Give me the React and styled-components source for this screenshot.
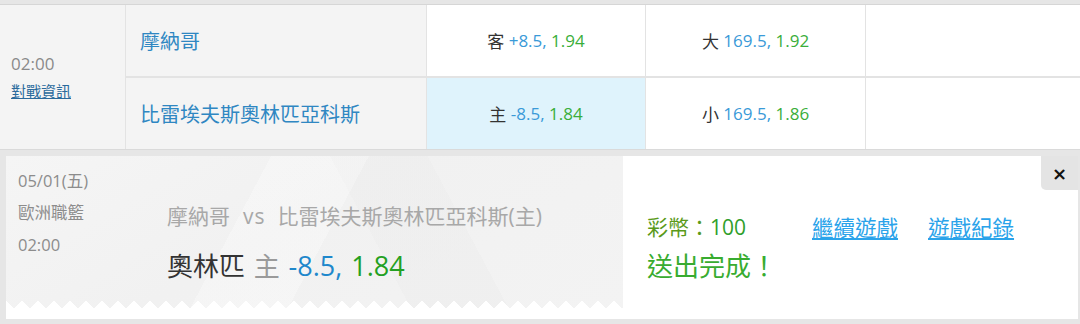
import React from 'react';
import styled, { createGlobalStyle } from 'styled-components';

const GlobalStyle = createGlobalStyle`
  body {
    margin: 0;
    background: #e6e6e6;
    font-family: "Open Sans", "Noto Sans CJK TC", sans-serif;
  }
`;

const Page = styled.div`
  width: 1080px;
  height: 324px;
  overflow: hidden;
  padding-top: 4px;
  box-sizing: border-box;
`;

const Table = styled.div`
  display: grid;
  grid-template-columns: 125px 300px 218px 219px 1fr;
  grid-template-rows: 71px 71px;
  column-gap: 1px;
  row-gap: 2px;
  background: #e3e3e3;
  border-top: 1px solid #d6d6d6;
  border-bottom: 1px solid #dadada;
`;

const TimeCell = styled.div`
  grid-row: span 2;
  background: #f4f4f4;
  padding-left: 11px;
  display: flex;
  flex-direction: column;
  justify-content: center;
  gap: 1px;
`;

const Time = styled.div`
  font-size: 17px;
  line-height: 26px;
  color: #8a8a8a;
`;

const InfoLink = styled.a`
  font-size: 15px;
  line-height: 26px;
  color: #2a6a9c;
  text-decoration: underline;
`;

const TeamCell = styled.div`
  background: #f4f4f4;
  padding-left: 14px;
  display: flex;
  align-items: center;
  font-size: 20px;
  color: #2f87c2;
`;

const OddsCell = styled.div`
  background: ${p => (p.selected ? '#dff3fc' : '#fff')};
  display: flex;
  align-items: center;
  justify-content: center;
  font-size: 17px;
  color: #333;
`;

const EmptyCell = styled.div`
  background: #fff;
`;

const Blue = styled.span`
  color: ${p => p.dark ? '#1f88cc' : '#3a9ad8'};
`;

const Green = styled.span`
  color: ${p => p.dark ? '#23a022' : '#3aae3a'};
`;

const Popup = styled.div`
  position: relative;
  margin: 6px 2px 0 6px;
  height: 163px;
  background: #fff;
  display: flex;
`;

const Ticket = styled.div`
  position: relative;
  width: 617px;
  height: 152px;
  box-sizing: border-box;
  padding: 9px 0 0 12px;
  display: flex;
  background:
    linear-gradient(118deg, transparent 38%, rgba(255,255,255,0.28) 38%, rgba(255,255,255,0.28) 52%, transparent 52%),
    linear-gradient(62deg, transparent 58%, rgba(236,236,236,0.45) 58%, rgba(236,236,236,0.45) 72%, transparent 72%),
    linear-gradient(150deg, #f5f5f5 0%, #f1f1f1 45%, #f3f3f3 100%);

  &::after {
    content: '';
    position: absolute;
    left: 0;
    right: 0;
    bottom: 0;
    height: 8px;
    background: conic-gradient(from -45deg at 50% 100%, transparent 90deg, #fff 0);
    background-size: 16px 8px;
  }
`;

const MetaColumn = styled.div`
  width: 149px;
  display: flex;
  flex-direction: column;
`;

const MetaLine = styled.div`
  font-size: 16.5px;
  line-height: 32px;
  color: #8c8c8c;
`;

const BetColumn = styled.div`
  display: flex;
  flex-direction: column;
  padding-top: 36px;
`;

const Matchup = styled.div`
  font-size: 21px;
  line-height: 30px;
  color: #a8a8a8;
  white-space: nowrap;
`;

const Versus = styled.span`
  margin: 0 12px 0 13px;
  letter-spacing: 1px;
`;

const Pick = styled.div`
  margin-top: 17px;
  font-size: 26px;
  line-height: 36px;
  color: #333;
  white-space: nowrap;
  word-spacing: 2px;
`;

const Side = styled.span`
  color: #9a9a9a;
`;

const Odds = styled.span`
  font-size: 27px;
`;

const Result = styled.div`
  padding: 57px 0 0 24px;
  display: flex;
  flex-direction: column;
`;

const CoinRow = styled.div`
  display: flex;
  align-items: center;
  height: 26px;
`;

const Coins = styled.div`
  font-size: 21px;
  color: #2fa02a;
  width: 165px;
`;

const CoinLabel = styled.span`
  color: #5a9a1a;
`;

const ActionLink = styled.a`
  font-size: 21.5px;
  color: #2aa3ea;
  text-decoration: underline;
  margin-right: 30px;
`;

const Done = styled.div`
  margin-top: 10px;
  font-size: 26px;
  line-height: 34px;
  color: #38ac30;
`;

const CloseButton = styled.div`
  position: absolute;
  top: 0;
  right: 0;
  width: 37px;
  height: 34px;
  background: #e4e4e4;
  border-bottom-left-radius: 5px;
  display: flex;
  align-items: center;
  justify-content: center;
  font-family: "DejaVu Sans", sans-serif;
  font-weight: bold;
  font-size: 18px;
  color: #111;
`;

export default function App() {
  return (
    <Page>
      <GlobalStyle />
      <Table>
        <TimeCell>
          <Time>02:00</Time>
          <InfoLink>對戰資訊</InfoLink>
        </TimeCell>
        <TeamCell>摩納哥</TeamCell>
        <OddsCell>客&nbsp;<Blue>+8.5,</Blue>&nbsp;<Green>1.94</Green></OddsCell>
        <OddsCell>大&nbsp;<Blue>169.5,</Blue>&nbsp;<Green>1.92</Green></OddsCell>
        <EmptyCell />
        <TeamCell>比雷埃夫斯奧林匹亞科斯</TeamCell>
        <OddsCell selected>主&nbsp;<Blue>-8.5,</Blue>&nbsp;<Green>1.84</Green></OddsCell>
        <OddsCell>小&nbsp;<Blue>169.5,</Blue>&nbsp;<Green>1.86</Green></OddsCell>
        <EmptyCell />
      </Table>
      <Popup>
        <Ticket>
          <MetaColumn>
            <MetaLine>05/01(五)</MetaLine>
            <MetaLine>歐洲職籃</MetaLine>
            <MetaLine>02:00</MetaLine>
          </MetaColumn>
          <BetColumn>
            <Matchup>摩納哥<Versus>vs</Versus>比雷埃夫斯奧林匹亞科斯(主)</Matchup>
            <Pick>奧林匹 <Side>主</Side> <Odds><Blue dark>-8.5,</Blue> <Green dark>1.84</Green></Odds></Pick>
          </BetColumn>
        </Ticket>
        <Result>
          <CoinRow>
            <Coins><CoinLabel>彩幣：</CoinLabel>100</Coins>
            <ActionLink>繼續遊戲</ActionLink>
            <ActionLink>遊戲紀錄</ActionLink>
          </CoinRow>
          <Done>送出完成！</Done>
        </Result>
        <CloseButton>×</CloseButton>
      </Popup>
    </Page>
  );
}
